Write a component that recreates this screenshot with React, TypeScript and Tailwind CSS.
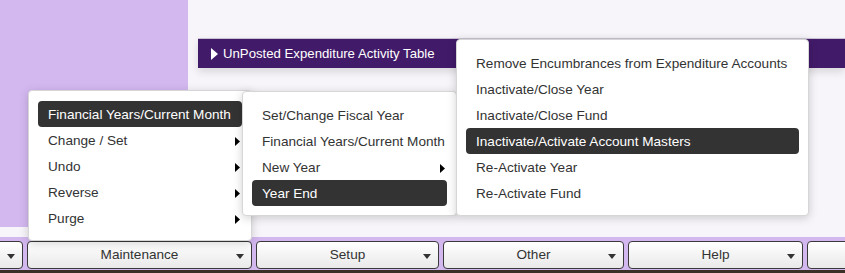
const font = { fontFamily: "'Liberation Sans', Arial, sans-serif" };

const Arrow = () => (
  <svg width="5" height="9" viewBox="0 0 5 9" className="shrink-0">
    <path d="M0 0 L5 4.5 L0 9 Z" fill="#000" />
  </svg>
);

const Down = () => (
  <svg width="8" height="5" viewBox="0 0 8 5">
    <path d="M0 0 H8 L4 5 Z" fill="#333" />
  </svg>
);

type Item = { label: string; sub?: boolean; active?: boolean };

const Menu = ({ items, className }: { items: Item[]; className: string }) => (
  <div
    className={`absolute bg-white rounded-[4px] border border-[#d6d6d6] shadow-[0_2px_10px_rgba(0,0,0,0.18)] px-[9px] pt-[10px] pb-[9px] ${className}`}
  >
    {items.map((it) => (
      <div
        key={it.label}
        className={`h-[26px] flex items-center justify-between pl-[10px] pr-[2px] pt-[2px] rounded-[4px] text-[13.6px] whitespace-nowrap ${
          it.active ? "bg-[#333333] text-white" : "text-[#333333]"
        }`}
      >
        <span>{it.label}</span>
        {it.sub && <Arrow />}
      </div>
    ))}
  </div>
);

const BarButton = ({ label, className }: { label: string; className: string }) => (
  <div
    className={`relative h-[28px] shrink-0 rounded-[4px] border border-[#3a3a3a] bg-gradient-to-b from-white to-[#e9e9e9] flex items-center justify-center pt-[1px] text-[13.6px] text-[#333] ${className}`}
  >
    <span>{label}</span>
    <span className="absolute right-[7px] top-[12px] flex">
      <Down />
    </span>
  </div>
);

export default function App() {
  return (
    <div className="relative w-[845px] h-[273px] overflow-hidden bg-[#f7f5f9]" style={font}>
      <div className="flex h-[237px]">
        <div className="w-[188px] h-[227px] bg-[#d3b8f0] shrink-0" />
        <div className="flex-1 pt-[38px] pl-[10px]">
          <div className="h-[30px] bg-[#421a6a] border-t border-[#c9c2d2] flex items-center pl-[13px] gap-[5px] text-white text-[13.2px] shadow-[0_4px_8px_rgba(0,0,0,0.12)]">
            <svg width="7" height="12" viewBox="0 0 7 12">
              <path d="M0 0 L7 6 L0 12 Z" fill="#fff" />
            </svg>
            <span>UnPosted Expenditure Activity Table</span>
          </div>
        </div>
      </div>
      <div className="h-[33px] bg-[#d3b8f0] pt-[4px] flex gap-[4px]">
        <BarButton label="" className="ml-[-150px] w-[173px]" />
        <BarButton label="Maintenance" className="w-[225px]" />
        <BarButton label="Setup" className="w-[183px]" />
        <BarButton label="Other" className="w-[181px]" />
        <BarButton label="Help" className="w-[175px]" />
        <BarButton label="" className="w-[120px]" />
      </div>
      <div className="h-[3px] bg-[#3b3026]" />

      <Menu
        className="left-[28px] top-[90px] w-[224px]"
        items={[
          { label: "Financial Years/Current Month", active: true },
          { label: "Change / Set", sub: true },
          { label: "Undo", sub: true },
          { label: "Reverse", sub: true },
          { label: "Purge", sub: true },
        ]}
      />
      <Menu
        className="left-[242px] top-[91px] w-[215px]"
        items={[
          { label: "Set/Change Fiscal Year" },
          { label: "Financial Years/Current Month" },
          { label: "New Year", sub: true },
          { label: "Year End", active: true },
        ]}
      />
      <Menu
        className="left-[456px] top-[39px] w-[353px]"
        items={[
          { label: "Remove Encumbrances from Expenditure Accounts" },
          { label: "Inactivate/Close Year" },
          { label: "Inactivate/Close Fund" },
          { label: "Inactivate/Activate Account Masters", active: true },
          { label: "Re-Activate Year" },
          { label: "Re-Activate Fund" },
        ]}
      />
    </div>
  );
}
